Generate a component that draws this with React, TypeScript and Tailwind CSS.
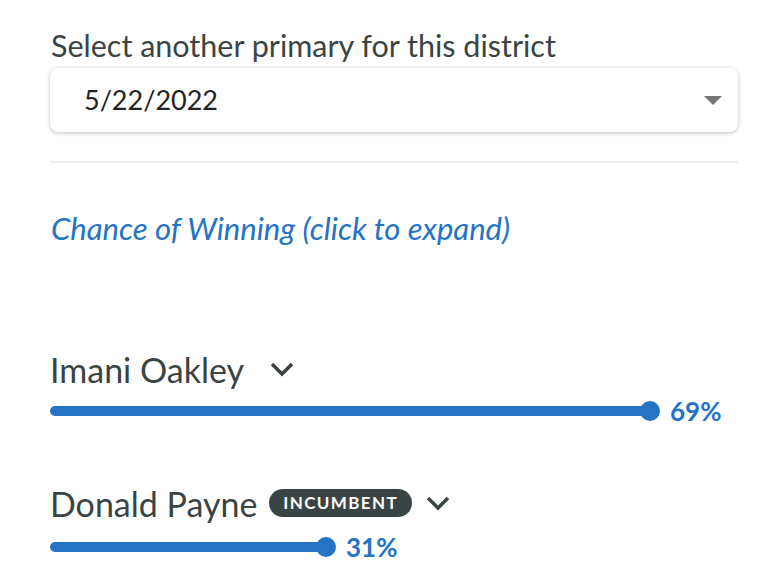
import React from "react";

const Chevron = () => (
  <svg width="24" height="16" viewBox="0 0 24 16" fill="none" stroke="#3a4444" strokeWidth="3.5" strokeLinecap="butt" strokeLinejoin="miter">
    <path d="M2 3 L12 13 L22 3" />
  </svg>
);

const Bar = ({ width, pct }: { width: number; pct: string }) => (
  <div className="flex items-center h-[22px]">
    <div className="relative h-[10px] rounded-full bg-[#2473c5]" style={{ width }}>
      <div className="absolute right-[-10px] top-[-5px] w-[20px] h-[20px] rounded-full bg-[#2473c5]" />
    </div>
    <span className="ml-[20px] text-[26px] font-bold text-[#2473c5] leading-none">{pct}</span>
  </div>
);

export default function App() {
  return (
    <div className="w-[770px] h-[586px] bg-white pl-[50px] pr-[32px] pt-[27px]" style={{ fontFamily: "Lato, 'Source Sans Pro', sans-serif" }}>
      <div className="text-[30.5px] leading-[36px] text-[#3a4444] pl-[1px]">Select another primary for this district</div>
      <div className="mt-[5px] h-[64px] rounded-[8px] bg-white shadow-[0_1px_4px_rgba(0,0,0,0.25)] flex items-center justify-between pl-[34px] pr-[16px]">
        <span className="text-[27px] text-[#222]">5/22/2022</span>
        <svg width="18" height="9" viewBox="0 0 18 9"><path d="M0 0 L18 0 L9 9 Z" fill="#757575" /></svg>
      </div>
      <div className="mt-[29px] h-[2px] bg-[#eef0f0]" />
      <div className="mt-[47px] text-[31px] italic text-[#2473c5] leading-[36px] pl-[1px]">Chance of Winning (click to expand)</div>
      <div className="mt-[103px] flex items-center gap-[26px] h-[40px]">
        <span className="text-[34px] text-[#3a4444]">Imani Oakley</span>
        <Chevron />
      </div>
      <div className="mt-[11px]">
        <Bar width={600} pct="69%" />
      </div>
      <div className="mt-[61px] flex items-center h-[40px]">
        <span className="text-[34px] text-[#3a4444]">Donald Payne</span>
        <span className="ml-[12px] h-[28px] px-[14px] rounded-full bg-[#3a4444] text-white text-[17px] font-bold tracking-[0.08em] flex items-center">INCUMBENT</span>
        <span className="ml-[14px] flex"><Chevron /></span>
      </div>
      <div className="mt-[13px]">
        <Bar width={276} pct="31%" />
      </div>
    </div>
  );
}
